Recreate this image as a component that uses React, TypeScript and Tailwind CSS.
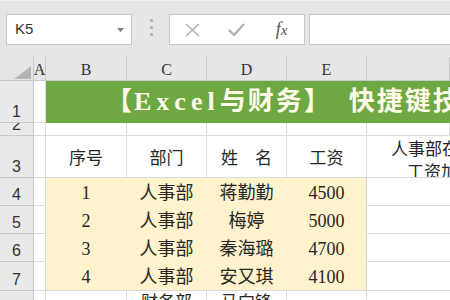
import React from 'react';

const serif = "font-['Liberation_Serif','Noto_Sans_CJK_SC',serif]";
const sans = "font-['Liberation_Sans','Noto_Sans_CJK_SC',sans-serif]";

const cols = ['A', 'B', 'C', 'D', 'E', ''];

const rows = [
  { n: '4', no: '1', dept: '人事部', name: '蒋勤勤', pay: '4500' },
  { n: '5', no: '2', dept: '人事部', name: '梅婷', pay: '5000' },
  { n: '6', no: '3', dept: '人事部', name: '秦海璐', pay: '4700' },
  { n: '7', no: '4', dept: '人事部', name: '安又琪', pay: '4100' },
];

const RowHead = ({ n }: { n: string }) => (
  <div className={`bg-[#e9e9e9] border-r border-b border-[#c8c8c8] flex items-end justify-center pb-[2px] overflow-hidden text-[16px] leading-none text-[#333] ${sans}`}>
    {n}
  </div>
);

const Cell = ({ children, className = '' }: { children?: React.ReactNode; className?: string }) => (
  <div className={`border-r border-b border-[#dadada] flex items-center justify-center overflow-hidden whitespace-nowrap text-[17px] text-[#262626] ${serif} ${className}`}>
    {children}
  </div>
);

const Yellow = ({ children, last = false, bottom = false }: { children?: React.ReactNode; last?: boolean; bottom?: boolean }) => (
  <div
    className={`bg-[#fff2cc] border-r border-b flex items-center justify-center pt-[3px] whitespace-nowrap text-[18px] text-[#262626] ${serif} ${last ? 'border-r-[#d0d0d0]' : 'border-r-[#fff2cc]'} ${bottom ? 'border-b-[#dadada]' : 'border-b-[#fff2cc]'}`}
  >
    {children}
  </div>
);

export default function App() {
  return (
    <div className="w-[450px] h-[300px] overflow-hidden bg-white flex flex-col">
      {/* formula bar */}
      <div className="h-[57px] shrink-0 bg-[#e6e6e6] border-t border-[#f2f2f2] flex items-start pt-[13px] pl-[6px]">
        <div className="w-[126px] h-[31px] bg-white border border-[#c6c6c6] flex items-center justify-between pl-[8px] pr-[7px]">
          <span className={`text-[15px] text-[#333] ${sans}`}>K5</span>
          <svg width="7" height="4" viewBox="0 0 7 4">
            <path d="M0 0h7L3.5 4z" fill="#7a7a7a" />
          </svg>
        </div>
        <div className="ml-[18px] mt-[5px] flex flex-col gap-[4px]">
          <span className="w-[3px] h-[3px] rounded-full bg-[#a6a6a6]" />
          <span className="w-[3px] h-[3px] rounded-full bg-[#a6a6a6]" />
          <span className="w-[3px] h-[3px] rounded-full bg-[#a6a6a6]" />
        </div>
        <div className="ml-[16px] w-[136px] h-[31px] bg-white border border-[#c6c6c6] grid grid-cols-3 items-center justify-items-center">
          <svg width="15" height="14" viewBox="0 0 15 14">
            <path d="M1 1l13 12M14 1L1 13" stroke="#b3b3b3" strokeWidth="1.6" fill="none" />
          </svg>
          <svg width="17" height="13" viewBox="0 0 17 13">
            <path d="M1 7l5 5L16 1" stroke="#b3b3b3" strokeWidth="2.4" fill="none" />
          </svg>
          <span className={`italic text-[18px] leading-none text-[#555] font-['Liberation_Serif',serif] -mt-[2px]`}>
            f<span className="text-[15px]">x</span>
          </span>
        </div>
        <div className="ml-[4px] flex-1 -mr-[4px] h-[31px] bg-white border border-[#c6c6c6]" />
      </div>

      {/* sheet grid */}
      <div className="grid grid-cols-[34px_12px_81px_80px_80px_80px_1fr] grid-rows-[24px_42px_13px_42px_28px_28px_28px_29px_28px]">
        {/* column header row */}
        <div className="bg-[#e6e6e6] border-r border-b border-[#c8c8c8] relative">
          <svg className="absolute right-[2px] bottom-[1px]" width="17" height="13" viewBox="0 0 17 13">
            <path d="M17 0v13H0z" fill="#b5b5b5" />
          </svg>
        </div>
        {cols.map((c, i) => (
          <div
            key={i}
            className={`bg-[#e6e6e6] border-r border-b border-[#c8c8c8] flex items-center justify-center pt-[2px] text-[16px] text-[#333] ${serif}`}
          >
            {c}
          </div>
        ))}

        {/* row 1 */}
        <RowHead n="1" />
        <div className="border-r border-b border-[#dadada]" />
        <div className="col-span-5 bg-[#6ea843] border-b border-[#6ea843] flex items-center pl-[60px] pt-[1px] overflow-hidden whitespace-nowrap">
          <span className={`text-[26px] leading-none font-bold tracking-[2px] text-[#fffbe8] ${serif}`}>
            【<span className="tracking-[5px]">Excel</span>与财务】&nbsp;&nbsp;快捷键技巧
          </span>
        </div>

        {/* row 2 */}
        <RowHead n="2" />
        <Cell />
        <Cell />
        <Cell />
        <Cell />
        <Cell />
        <Cell />

        {/* row 3 */}
        <RowHead n="3" />
        <Cell />
        <Cell className="pt-[4px]">序号</Cell>
        <Cell className="pt-[4px]">部门</Cell>
        <Cell className="pt-[4px]">姓　名</Cell>
        <Cell className="pt-[4px]">工资</Cell>
        <div className={`border-b border-[#dadada] flex flex-col items-start pl-[24px] pt-[2px] overflow-hidden whitespace-nowrap text-[17px] leading-[23px] text-[#262626] ${serif}`}>
          <span>人事部在职员工</span>
          <span className="pl-[16px]">工资加总</span>
        </div>

        {/* data rows */}
        {rows.map((r, i) => (
          <React.Fragment key={r.n}>
            <RowHead n={r.n} />
            <div className="border-r border-b border-[#dadada]" />
            <Yellow bottom={i === rows.length - 1}>{r.no}</Yellow>
            <Yellow bottom={i === rows.length - 1}>{r.dept}</Yellow>
            <Yellow bottom={i === rows.length - 1}>{r.name}</Yellow>
            <Yellow last bottom={i === rows.length - 1}>{r.pay}</Yellow>
            <div className="border-b border-[#dadada]" />
          </React.Fragment>
        ))}

        {/* row 8 */}
        <RowHead n="8" />
        <Cell />
        <Cell />
        <Cell className="items-end pb-[3px]">财务部</Cell>
        <Cell className="items-end pb-[3px]">马向锋</Cell>
        <Cell />
        <div className="border-b border-[#dadada]" />
      </div>
    </div>
  );
}
